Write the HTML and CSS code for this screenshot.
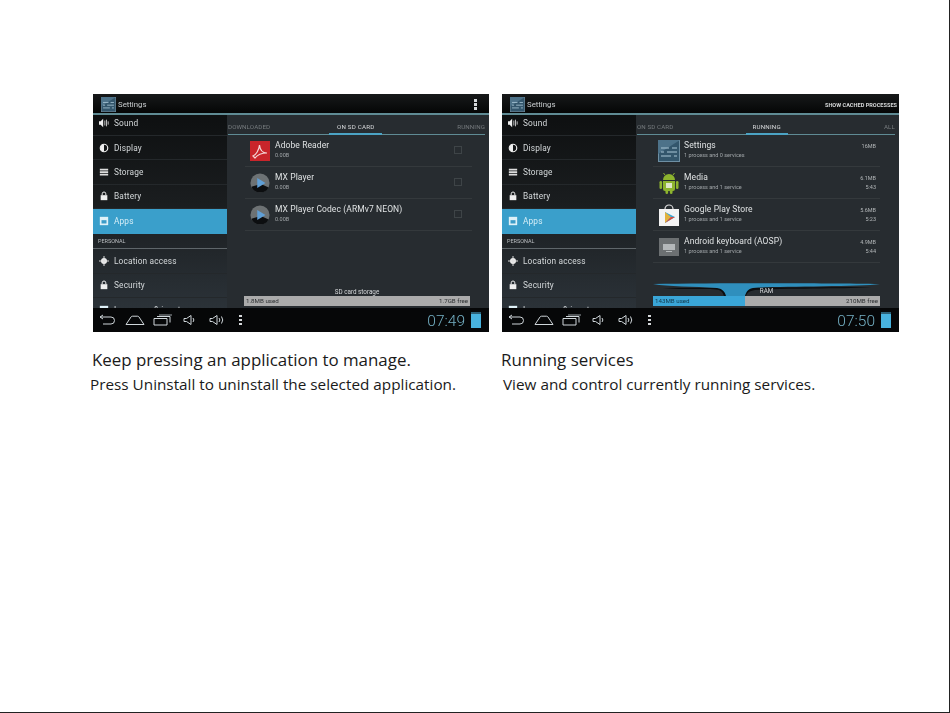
FILE: index.html
```html
<!DOCTYPE html>
<html lang="en">
<head>
  <meta charset="UTF-8">
  <title>Apps - Manage applications</title>
  <link rel="stylesheet" href="styles.css">
</head>
<body>
  <svg class="defs" width="0" height="0">
    <symbol id="i-settings" viewBox="0 0 22 22">
      <rect x="0.5" y="0.5" width="21" height="21" fill="#33566c" stroke="#6e8fa3"/>
      <path d="M0 0h22L0 14z" fill="#4d7289"/>
      <path d="M3 8h8M14 8h5M3 12h3M9 12h10M3 16h10M16 16h3" stroke="#a9c6d6" stroke-width="1.2"/>
    </symbol>
    <symbol id="i-sound" viewBox="0 0 12 12">
      <path d="M0 4h2l3-3v10L2 8H0z" fill="#eee"/>
      <path d="M7 3v6M9 2v8M11 4v4" stroke="#ddd" stroke-width="1"/>
    </symbol>
    <symbol id="i-display" viewBox="0 0 12 12">
      <circle cx="6" cy="6" r="4.5" fill="none" stroke="#eee" stroke-width="1.4"/>
      <path d="M6 1.5a4.5 4.5 0 0 0 0 9z" fill="#eee"/>
    </symbol>
    <symbol id="i-storage" viewBox="0 0 12 12">
      <path d="M1 2h10v2.2H1zM1 5h10v2.2H1zM1 8h10v2.2H1z" fill="#ddd"/>
    </symbol>
    <symbol id="i-lock" viewBox="0 0 12 12">
      <rect x="2" y="5" width="8" height="6" fill="#eee"/>
      <path d="M3.8 5V3.4a2.2 2.2 0 0 1 4.4 0V5" fill="none" stroke="#eee" stroke-width="1.2"/>
    </symbol>
    <symbol id="i-apps" viewBox="0 0 12 12">
      <rect x="1" y="1" width="10" height="10" fill="#dff1f8"/>
      <path d="M3 5h6v4H3z" fill="#3c9cc8"/>
    </symbol>
    <symbol id="i-location" viewBox="0 0 12 12">
      <circle cx="6" cy="6" r="3.6" fill="#eee"/>
      <path d="M6 0v12M0 6h12" stroke="#ddd" stroke-width="1.2"/>
    </symbol>
    <symbol id="i-back" viewBox="0 0 16 12">
      <path d="M1 3h11a3 3 0 0 1 0 7H4M1 3l3-2M1 3l3 2" fill="none" stroke="#cfd6da" stroke-width="1"/>
    </symbol>
    <symbol id="i-home" viewBox="0 0 20 12">
      <path d="M1 10.500L6 3q.5-.8 1.500-.8h5q1 0 1.500.8l5 7.500z" fill="none" stroke="#cfd6da" stroke-width="1"/>
    </symbol>
    <symbol id="i-recent" viewBox="0 0 19 12">
      <path d="M1 4.500h13v6.500H1zM4 2.500h13v6" fill="none" stroke="#cfd6da" stroke-width="1"/>
      <path d="M6 1h13" stroke="#9aa2a6" stroke-width="1"/>
    </symbol>
    <symbol id="i-voldown" viewBox="0 0 13 12">
      <path d="M1 4.500h2.500L8 1.500v9L3.500 7.500H1z" fill="none" stroke="#cfd6da" stroke-width="1"/>
      <path d="M10 4a3 3 0 0 1 0 4" fill="none" stroke="#cfd6da" stroke-width="1"/>
    </symbol>
    <symbol id="i-volup" viewBox="0 0 16 12">
      <path d="M1 4.500h2.500L8 1.500v9L3.500 7.500H1z" fill="none" stroke="#cfd6da" stroke-width="1"/>
      <path d="M10 4a3 3 0 0 1 0 4M12.500 2.500a6 6 0 0 1 0 7" fill="none" stroke="#cfd6da" stroke-width="1"/>
    </symbol>
    <symbol id="i-pdf" viewBox="0 0 20 20">
      <rect width="20" height="20" fill="#c9252b"/>
      <path d="M3 15c3-1 6-6 6.500-11 .5 5 3 8 7.500 8-4 0-9 1-12 5z" fill="none" stroke="#f4d5d5" stroke-width="1.2"/>
    </symbol>
    <symbol id="i-mx" viewBox="0 0 22 22">
      <circle cx="11" cy="11" r="10.500" fill="#6d7274"/>
      <path d="M1.500 15a10.500 10.500 0 0 0 19 1L12 12z" fill="#0c0e10"/>
      <path d="M8 5.500L17 11l-9 5.500z" fill="#5f9fd6"/>
    </symbol>
    <symbol id="i-android" viewBox="0 0 22 22">
      <path d="M5 8a6 6 0 0 1 12 0z" fill="#8db42e"/>
      <path d="M5 9h12v8a2 2 0 0 1-2 2H7a2 2 0 0 1-2-2z" fill="#8db42e"/>
      <rect x="1.500" y="9" width="2.600" height="8" rx="1.300" fill="#8db42e"/>
      <rect x="17.900" y="9" width="2.600" height="8" rx="1.300" fill="#8db42e"/>
      <rect x="7.500" y="18" width="2.600" height="4" rx="1.300" fill="#8db42e"/>
      <rect x="11.900" y="18" width="2.600" height="4" rx="1.300" fill="#8db42e"/>
      <rect x="8" y="11" width="6" height="5" fill="#dfe6c9"/>
      <path d="M7 3L5.500 1M15 3l1.500-2" stroke="#8db42e"/>
    </symbol>
    <symbol id="i-store" viewBox="0 0 22 22">
      <path d="M7 5a4 4 0 0 1 8 0" fill="none" stroke="#ddd" stroke-width="1.200"/>
      <path d="M1 5h20v17H1z" fill="#f3f3f3"/>
      <path d="M7 8l10 5-10 6z" fill="#3ba7d8"/>
      <path d="M7 8l6 5-6 6z" fill="#e3b23c"/>
      <path d="M7 19l6-6 4 0z" fill="#d8483b"/>
    </symbol>
    <symbol id="i-keyboard" viewBox="0 0 22 22">
      <rect x="1" y="2" width="20" height="18" fill="#6c7072"/>
      <rect x="5" y="8" width="12" height="6" fill="#b4b8ba"/>
      <path d="M8 15.500h6" stroke="#b4b8ba"/>
    </symbol>
  </svg>

  <main class="shots">
    <!-- left: apps on sd card -->
    <figure class="shot">
      <div class="screen">
        <header class="actionbar">
          <svg class="bar-icon"><use href="#i-settings"/></svg>
          <span class="bar-title">Settings</span>
          <span class="overflow-dots"><i></i><i></i><i></i></span>
        </header>
        <div class="body">
          <nav class="sidebar">
            <div class="side-row"><svg class="side-icon"><use href="#i-sound"/></svg>Sound</div>
            <div class="side-row"><svg class="side-icon"><use href="#i-display"/></svg>Display</div>
            <div class="side-row"><svg class="side-icon"><use href="#i-storage"/></svg>Storage</div>
            <div class="side-row"><svg class="side-icon"><use href="#i-lock"/></svg>Battery</div>
            <div class="side-row active"><svg class="side-icon"><use href="#i-apps"/></svg>Apps</div>
            <div class="side-head">PERSONAL</div>
            <div class="side-row"><svg class="side-icon"><use href="#i-location"/></svg>Location access</div>
            <div class="side-row"><svg class="side-icon"><use href="#i-lock"/></svg>Security</div>
            <div class="side-row"><svg class="side-icon"><use href="#i-apps"/></svg>Language &amp; input</div>
          </nav>
          <section class="content">
            <div class="tabs">
              <span class="tab">DOWNLOADED</span>
              <span class="tab current tab-sd">ON SD CARD</span>
              <span class="tab">RUNNING</span>
            </div>
            <div class="app-list">
              <div class="app-row">
                <svg class="app-icon"><use href="#i-pdf"/></svg>
                <div class="app-text"><div class="app-name">Adobe Reader</div><div class="app-sub">0.00B</div></div>
                <span class="check"></span>
              </div>
              <div class="app-row">
                <svg class="app-icon"><use href="#i-mx"/></svg>
                <div class="app-text"><div class="app-name">MX Player</div><div class="app-sub">0.00B</div></div>
                <span class="check"></span>
              </div>
              <div class="app-row">
                <svg class="app-icon"><use href="#i-mx"/></svg>
                <div class="app-text"><div class="app-name">MX Player Codec (ARMv7 NEON)</div><div class="app-sub">0.00B</div></div>
                <span class="check"></span>
              </div>
            </div>
            <div class="storage">
              <div class="storage-label">SD card storage</div>
              <div class="storage-bar"><span>1.8MB used</span><span>1.7GB free</span></div>
            </div>
          </section>
        </div>
        <footer class="navbar">
          <svg class="nav-icon back"><use href="#i-back"/></svg>
          <svg class="nav-icon home"><use href="#i-home"/></svg>
          <svg class="nav-icon recent"><use href="#i-recent"/></svg>
          <svg class="nav-icon voldown"><use href="#i-voldown"/></svg>
          <svg class="nav-icon volup"><use href="#i-volup"/></svg>
          <span class="overflow-dots nav-dots"><i></i><i></i><i></i></span>
          <span class="clock">07:49</span>
          <span class="battery"></span>
        </footer>
      </div>
      <figcaption>
        <h2 class="cap-title">Keep pressing an application to manage.</h2>
        <p class="cap-text cap-left">Press Uninstall to uninstall the selected application.</p>
      </figcaption>
    </figure>

    <!-- right: running services -->
    <figure class="shot">
      <div class="screen">
        <header class="actionbar">
          <svg class="bar-icon"><use href="#i-settings"/></svg>
          <span class="bar-title">Settings</span>
          <span class="bar-action">SHOW CACHED PROCESSES</span>
        </header>
        <div class="body">
          <nav class="sidebar">
            <div class="side-row"><svg class="side-icon"><use href="#i-sound"/></svg>Sound</div>
            <div class="side-row"><svg class="side-icon"><use href="#i-display"/></svg>Display</div>
            <div class="side-row"><svg class="side-icon"><use href="#i-storage"/></svg>Storage</div>
            <div class="side-row"><svg class="side-icon"><use href="#i-lock"/></svg>Battery</div>
            <div class="side-row active"><svg class="side-icon"><use href="#i-apps"/></svg>Apps</div>
            <div class="side-head">PERSONAL</div>
            <div class="side-row"><svg class="side-icon"><use href="#i-location"/></svg>Location access</div>
            <div class="side-row"><svg class="side-icon"><use href="#i-lock"/></svg>Security</div>
            <div class="side-row"><svg class="side-icon"><use href="#i-apps"/></svg>Language &amp; input</div>
          </nav>
          <section class="content">
            <div class="tabs">
              <span class="tab">ON SD CARD</span>
              <span class="tab current tab-run">RUNNING</span>
              <span class="tab">ALL</span>
            </div>
            <div class="app-list run-list">
              <div class="app-row">
                <svg class="app-icon big"><use href="#i-settings"/></svg>
                <div class="app-text"><div class="app-name">Settings</div><div class="app-sub">1 process and 0 services</div></div>
                <div class="run-meta"><div>16MB</div></div>
              </div>
              <div class="app-row">
                <svg class="app-icon big"><use href="#i-android"/></svg>
                <div class="app-text"><div class="app-name">Media</div><div class="app-sub">1 process and 1 service</div></div>
                <div class="run-meta"><div>6.1MB</div><div>5:43</div></div>
              </div>
              <div class="app-row">
                <svg class="app-icon big"><use href="#i-store"/></svg>
                <div class="app-text"><div class="app-name">Google Play Store</div><div class="app-sub">1 process and 1 service</div></div>
                <div class="run-meta"><div>5.6MB</div><div>5:23</div></div>
              </div>
              <div class="app-row">
                <svg class="app-icon big"><use href="#i-keyboard"/></svg>
                <div class="app-text"><div class="app-name">Android keyboard (AOSP)</div><div class="app-sub">1 process and 1 service</div></div>
                <div class="run-meta"><div>4.9MB</div><div>5:44</div></div>
              </div>
            </div>
            <div class="storage ram">
              <svg class="ram-curve" viewBox="0 0 227 13" preserveAspectRatio="none">
                <path d="M10 5C30 7 60 5 66 7 70 9 70 11 71 13H93C94 10 96 8 102 7 130 5 200 6 218 4z" fill="#0b0d0f"/>
                <path d="M0 1C60 0 170 0 227 1 205 4 120 3 100 5 94 6 93 10 92 13H73C72 9 70 6 64 5 40 3 15 4 0 1z" fill="#2f8fbd"/>
              </svg>
              <div class="storage-label">RAM</div>
              <div class="storage-bar ram-bar"><span class="ram-used">143MB used</span><span>210MB free</span></div>
            </div>
          </section>
        </div>
        <footer class="navbar">
          <svg class="nav-icon back"><use href="#i-back"/></svg>
          <svg class="nav-icon home"><use href="#i-home"/></svg>
          <svg class="nav-icon recent"><use href="#i-recent"/></svg>
          <svg class="nav-icon voldown"><use href="#i-voldown"/></svg>
          <svg class="nav-icon volup"><use href="#i-volup"/></svg>
          <span class="overflow-dots nav-dots"><i></i><i></i><i></i></span>
          <span class="clock">07:50</span>
          <span class="battery"></span>
        </footer>
      </div>
      <figcaption>
        <h2 class="cap-title">Running services</h2>
        <p class="cap-text cap-right">View and control currently running services.</p>
      </figcaption>
    </figure>
  </main>
</body>
</html>
```

FILE: styles.css
```css
* {
  box-sizing: border-box;
}

html, body {
  margin: 0;
  height: 713px;
}

body {
  background: #fff;
  border-right: 1px solid #222;
  border-bottom: 1px solid #222;
  overflow: hidden;
  font-family: 'Roboto', sans-serif;
}

.defs {
  display: block;
  height: 0;
}

.shots {
  display: grid;
  grid-template-columns: 396px 397px;
  column-gap: 13px;
  padding: 94px 0 0 93px;
}

.shot {
  margin: 0;
}

/* tablet screenshot */
.screen {
  height: 238px;
  display: flex;
  flex-direction: column;
  background: #272c30;
  color: #e8eaeb;
  overflow: hidden;
  filter: blur(0.5px);
}

.actionbar {
  flex: 0 0 21px;
  display: flex;
  align-items: center;
  padding: 2px 8px 0 8px;
  background: linear-gradient(#17191a, #050606);
  border-bottom: 2px solid #5f8b94;
}

.bar-icon {
  width: 15px;
  height: 15px;
  margin-right: 2px;
}

.bar-title {
  font-size: 7.800px;
  color: #c9cdcf;
}

.bar-action {
  margin-left: auto;
  margin-right: -6px;
  font-size: 5.600px;
  font-weight: 700;
  color: #d6d8d9;
}

.overflow-dots {
  margin-left: auto;
  margin-right: 4px;
  display: flex;
  flex-direction: column;
  gap: 1.500px;
}

.overflow-dots i {
  width: 3px;
  height: 2.500px;
  background: #d5d8da;
}

.body {
  flex: 1;
  min-height: 0;
  display: flex;
}

.sidebar {
  flex: 0 0 134px;
  overflow: hidden;
  background: linear-gradient(#0e1011 0, #1a1d1f 45%, #2b3238 100%);
}

.side-row {
  height: 24.400px;
  display: flex;
  align-items: center;
  padding-left: 6px;
  font-size: 8.300px;
  letter-spacing: 0.15px;
  color: #d4d8da;
  border-bottom: 1px solid #24282b;
  white-space: nowrap;
}

.side-row:first-child {
  margin-top: -3.400px;
}

.side-icon {
  width: 10px;
  height: 10px;
  margin-right: 5px;
  flex: none;
}

.side-row.active {
  background: #3a9fcb;
  color: #d5edf6;
  border-bottom: 0;
}

.side-head {
  height: 15.600px;
  margin-right: -2px;
  padding: 4px 0 0 5px;
  font-size: 5.500px;
  color: #b9bdc0;
  border-bottom: 1px solid #5f666a;
}

.content {
  flex: 1;
  min-width: 0;
  display: flex;
  flex-direction: column;
  background: #272c30;
}

.tabs {
  flex: 0 0 20px;
  margin: 0 4px 0 1px;
  padding-top: 4px;
  display: flex;
  justify-content: space-between;
  border-bottom: 1px solid #5f8b94;
  font-size: 6.200px;
  letter-spacing: 0.1px;
  color: #767b7e;
}

.tab {
  display: flex;
  align-items: center;
}

.tab.current {
  position: relative;
  color: #d8dadc;
  letter-spacing: 0.2px;
}

.tab.current::after {
  content: "";
  position: absolute;
  left: -8px;
  right: -8px;
  bottom: -1px;
  height: 2px;
  background: #4ba3c4;
}

.tab-sd {
  margin-right: 16px;
}

.tab-run {
  margin-right: 24px;
}

.tab-run.current::after {
  left: -7px;
  right: -7px;
}

.app-list {
  padding: 0 17px 0 18px;
}

.run-list {
  padding: 0 19px 0 17px;
}

.app-row {
  height: 32px;
  display: flex;
  align-items: center;
  padding-left: 5px;
  border-bottom: 1px solid #34393c;
}

.app-icon {
  width: 20px;
  height: 20px;
  margin-right: 5px;
  flex: none;
}

.app-icon.big {
  width: 22px;
  height: 22px;
  margin-right: 4px;
}

.app-text {
  flex: 1;
  min-width: 0;
  margin-top: -3px;
}

.app-name {
  font-size: 8.500px;
  color: #dfe2e3;
  line-height: 11px;
  letter-spacing: 0.1px;
}

.app-sub {
  font-size: 5.500px;
  line-height: 8px;
  color: #a0a5a8;
}

.check {
  width: 8px;
  height: 8px;
  margin-right: 10px;
  margin-top: -2px;
  border: 1px solid #3e4447;
}

.run-meta {
  font-size: 5.500px;
  line-height: 9px;
  color: #b3b7b9;
  text-align: right;
  margin-right: 4px;
  align-self: flex-start;
  padding-top: 7px;
}

.storage {
  position: relative;
  margin: auto 19px 2px 17px;
}

.storage-label {
  font-size: 6.300px;
  line-height: 8px;
  text-align: center;
  color: #d5d8da;
}

.storage-bar {
  height: 10px;
  padding: 0 2px;
  display: flex;
  justify-content: space-between;
  align-items: center;
  background: #ababab;
  color: #2b2e30;
  font-size: 6.200px;
}

.ram-curve {
  position: absolute;
  left: 0;
  top: -5px;
  width: 100%;
  height: 13px;
}

.ram .storage-label {
  position: relative;
  top: -1px;
}

.ram-bar {
  background: linear-gradient(90deg, #3aa6d8 0, #3aa6d8 40.500%, #ababab 40.500%);
}

.ram-used {
  color: #12384a;
}

.navbar {
  flex: 0 0 24px;
  display: flex;
  align-items: center;
  padding: 0 8px 0 6px;
  background: #060708;
}

.nav-icon {
  height: 12px;
  flex: none;
}

.back {
  width: 16px;
}

.home {
  width: 20px;
  margin-left: 10px;
}

.recent {
  width: 19px;
  margin-left: 8px;
}

.voldown {
  width: 13px;
  margin-left: 11px;
}

.volup {
  width: 16px;
  margin-left: 13px;
}

.nav-dots {
  margin-left: 14px;
  margin-right: 0;
}

.clock {
  margin-left: auto;
  margin-top: 2px;
  font-size: 15.500px;
  font-weight: 300;
  color: #74b0c4;
}

.battery {
  width: 10px;
  height: 16px;
  margin-left: 6px;
  background: linear-gradient(#2c5f75 0, #2c5f75 10%, #48b2de 10%);
}

/* captions */
figcaption {
  font-family: 'Open Sans', sans-serif;
  color: #1a1a1a;
}

.cap-title {
  margin: 17px 0 0 -1px;
  font-size: 16.900px;
  line-height: 22px;
  font-weight: 400;
}

.cap-text {
  margin: 3px 0 0;
  font-size: 15.300px;
  line-height: 21px;
}

.cap-left {
  margin-left: -3px;
}

.cap-right {
  margin-left: 1px;
}
```
